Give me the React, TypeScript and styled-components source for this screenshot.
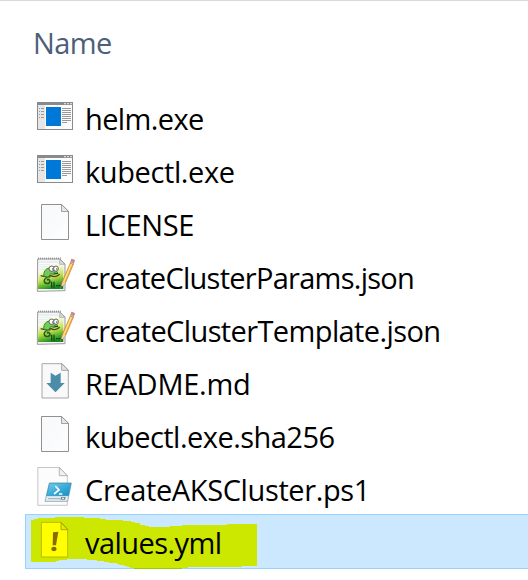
import React from "react";
import styled, { createGlobalStyle } from "styled-components";

const GlobalStyle = createGlobalStyle`
  * { box-sizing: border-box; }
  body { margin: 0; background: #fff; overflow: hidden; }
`;

const Pane = styled.main`
  height: 580px;
  border-top: 1px solid #d9d9d9;
  background: #fff;
  color: #000;
  font: 29px/54px "Open Sans", "Segoe UI", sans-serif;
  overflow: hidden;
`;

const ColumnHeader = styled.header`
  height: 89px;
  padding: 15px 0 0 33px;
  color: #4c607a;
`;

const Label = styled.span<{ $spacing: number }>`
  letter-spacing: ${(p) => p.$spacing}px;
  white-space: nowrap;
`;

const FileList = styled.ul`
  margin: 0;
  padding: 0 0 0 25px;
  list-style: none;
`;

const FileRow = styled.li<{ $selected?: boolean }>`
  position: relative;
  display: flex;
  height: ${(p) => (p.$selected ? 55 : 53)}px;
  margin-right: -2px;
  padding: ${(p) => (p.$selected ? "5px 0 0 10px" : "6px 0 0 11px")};
  border: ${(p) => (p.$selected ? "1px solid #99d1ff" : "0")};
  background: ${(p) => (p.$selected ? "#cce8ff" : "transparent")};
`;

const IconSlot = styled.span`
  position: relative;
  flex: none;
  width: 40px;
  height: 40px;
  margin-right: 9px;
  svg { display: block; }
`;

const FileName = styled(Label)`
  position: relative;
  margin-top: -4px;
`;

const Marker = styled.svg`
  position: absolute;
  left: -11px;
  top: -10px;
`;

const Icon = ({ box, children }: { box: string; children: React.ReactNode }) => (
  <svg width="40" height="40" viewBox={box}>{children}</svg>
);

const AppIcon = () => (
  <Icon box="48 18 120 120">
    <rect x="52.5" y="37.5" width="105" height="81" fill="#fcfcfc" stroke="#878b8e" strokeWidth="3" />
    <rect x="54" y="45" width="21" height="72" fill="#e6e6e6" />
    <rect x="51" y="36" width="108" height="9" fill="#878b8e" />
    <path d="M132 41h6M141 41h6M150 41h6" stroke="#d8dadb" strokeWidth="4" />
    <rect x="78" y="51" width="45" height="57" fill="#0078d7" />
    <path d="M57 55.5h3M63 55.5h9M57 64.5h3M63 64.5h9M57 73.5h3M63 73.5h9M57 82.5h3M63 82.5h9M126 55.5h27M126 61.5h27M126 67.5h27M126 73.5h27M126 79.5h27M126 85.5h27M126 91.5h27M126 97.5h15" stroke="#999" strokeWidth="3" />
  </Icon>
);

const BlankIcon = () => (
  <Icon box="33 21 120 120">
    <defs>
      <linearGradient id="sheet" x1="0" y1="0" x2="1" y2="1">
        <stop stopColor="#f7f9fa" /><stop offset=".6" stopColor="#fafbfc" /><stop offset="1" stopColor="#fff" />
      </linearGradient>
    </defs>
    <path d="M49.5 28.5H110L130.500 48V133.500H49.500Z" fill="url(#sheet)" stroke="#919191" strokeWidth="3" />
    <path d="M109.500 28.500V49.500H130.500Z" fill="#e6e6e6" stroke="#919191" strokeWidth="2.500" />
    <path d="M114 30L130 46" stroke="#fff" strokeWidth="2" strokeDasharray="3 2" />
  </Icon>
);

const NotepadIcon = () => (
  <Icon box="33 15 120 120">
    <defs>
      <linearGradient id="grass" x1=".2" y1="0" x2=".5" y2="1">
        <stop stopColor="#fff" /><stop offset=".3" stopColor="#f4f8d8" /><stop offset=".62" stopColor="#b9e047" /><stop offset="1" stopColor="#118a20" />
      </linearGradient>
    </defs>
    <path d="M38 27H105L120 42V122L37 124Z" fill="#f5f5f5" stroke="#888" strokeWidth="2.500" />
    <path d="M41 39H115V117H39Z" fill="url(#grass)" />
    <path d="M41 36H104M40 43H75M40 50H67M40 57H60" stroke="#c3dceb" strokeWidth="1.500" />
    <path d="M39 25H107" stroke="#777" strokeWidth="5" strokeDasharray="2 4" />
    <path d="M105 27L104 43H119Z" fill="#ddd" stroke="#999" strokeWidth="2" />
    <path d="M47 77Q66 83 77 77Q92 84 104 73" fill="none" stroke="#54401c" strokeWidth="4" />
    <path d="M56 76Q57 56 73 54Q82 48 90 58L99 70Q86 76 77 71L70 82L58 79Z" fill="#72cb55" stroke="#267529" strokeWidth="2.500" />
    <path d="M76 81Q60 82 58 91Q57 101 69 100Q78 98 73 90Q69 86 66 91" fill="none" stroke="#26591d" strokeWidth="5" />
    <path d="M75 81Q63 83 61 91Q61 98 69 97" fill="none" stroke="#77cc48" strokeWidth="2" />
    <ellipse cx="80" cy="56" rx="8" ry="8" fill="#fff" stroke="#444" strokeWidth="2.500" />
    <ellipse cx="93" cy="56" rx="7" ry="8" fill="#fff" stroke="#444" strokeWidth="2.500" />
    <path d="M81 57h3M93 57h4M86 69l13 2" stroke="#263c25" strokeWidth="3" />
    <path d="M80 95V113M87 95V113M93 107h5M100 107h5M107 107h5" stroke="#123d18" strokeWidth="3.500" />
    <path d="M107 115L113 92L136 39L145 43L122 97Z" fill="#f6ae3c" stroke="#c07a28" strokeWidth="2" />
    <path d="M117 94L139 42" stroke="#ffe58a" strokeWidth="4" />
    <path d="M107 115L114 93L122 97Z" fill="#efd3aa" />
    <path d="M107 115l3-8 4 3Z" fill="#333" />
    <path d="M136 39L140 27L149 31L145 43Z" fill="#d88780" stroke="#a86d61" strokeWidth="1.500" />
    <path d="M137 37l8 4" stroke="#bbb" strokeWidth="4" />
  </Icon>
);

const MarkdownIcon = () => (
  <Icon box="33 18 120 120">
    <path d="M51 26H111L130 45V129H51Z" fill="#f9f9f9" stroke="#969696" strokeWidth="2.500" />
    <path d="M110 26V46H130Z" fill="#e4e4e4" stroke="#969696" strokeWidth="2.500" />
    <path d="M77 53L91.500 62L107 53V84H119L91.500 112L64 84H77Z" fill="#4b8ca9" />
  </Icon>
);

const PowerShellIcon = () => (
  <Icon box="33 21 120 120">
    <defs>
      <linearGradient id="console" x1="0" y1="0" x2="1" y2="1">
        <stop stopColor="#7dcaea" /><stop offset=".5" stopColor="#39addc" /><stop offset="1" stopColor="#168ec1" />
      </linearGradient>
    </defs>
    <path d="M38.500 22.500H103L127 47V136H38.500Z" fill="#fcfcfc" stroke="#aaa" strokeWidth="2" />
    <path d="M103 22.500V47H127Z" fill="#f1f1f1" stroke="#969696" strokeWidth="2" />
    <path d="M73 69H139L128 124H60Z" fill="#e4edf1" stroke="#6f929f" strokeWidth="2" />
    <path d="M74 70H138L130 107H65Z" fill="url(#console)" stroke="#268eb4" strokeWidth="2" />
    <path d="M91 78L102 90L87 102M102 102H112" fill="none" stroke="#fff" strokeWidth="5" />
    <path d="M69 116H105" stroke="#98abb3" strokeWidth="3" />
    <path d="M108 111h14l-2 8h-14Z" fill="#748e99" />
    <path d="M111 115h6" stroke="#fff" strokeWidth="3" />
  </Icon>
);

const YamlIcon = () => (
  <Icon box="63 45 120 120">
    <path d="M79 52H139L158 72V156H79Z" fill="#ff0" stroke="#b7a900" strokeWidth="2.500" />
    <path d="M138 53V74H158Z" fill="#dfed00" stroke="#a29b00" strokeWidth="2.500" />
    <path d="M114 82L130 80L123 121H113Z" fill="#8b6900" />
    <ellipse cx="117" cy="132" rx="8" ry="6.500" fill="#8b6900" />
  </Icon>
);

const files = [
  { name: "helm.exe", icon: AppIcon, spacing: -0.62 },
  { name: "kubectl.exe", icon: AppIcon, spacing: -0.4 },
  { name: "LICENSE", icon: BlankIcon, spacing: -0.35 },
  { name: "createClusterParams.json", icon: NotepadIcon, spacing: -0.73 },
  { name: "createClusterTemplate.json", icon: NotepadIcon, spacing: -0.61 },
  { name: "README.md", icon: MarkdownIcon, spacing: -0.25 },
  { name: "kubectl.exe.sha256", icon: BlankIcon, spacing: -0.53 },
  { name: "CreateAKSCluster.ps1", icon: PowerShellIcon, spacing: -0.38 },
  { name: "values.yml", icon: YamlIcon, spacing: -0.55, selected: true },
];

export default function App() {
  return (
    <>
      <GlobalStyle />
      <Pane>
        <ColumnHeader><Label $spacing={-0.6}>Name</Label></ColumnHeader>
        <FileList>
          {files.map(({ name, icon: Glyph, spacing, selected }) => (
            <FileRow key={name} $selected={selected}>
              {selected && (
                <Marker width="260" height="75" viewBox="0 0 780 225" shapeRendering="crispEdges">
                  <path d="M48 45H57V42H69V39H120V36H207V39H255V42H273V45H324V48H348V51H360V54H375V60H390V63H402V66H465V63H501V60H636V57H726V183H681V186H519V189H501V192H357V189H345V186H336V183H327V180H312V177H306V174H282V171H267V168H246V165H216V162H156V165H132V168H123V171H48Z" fill="#cce800" />
                  <path d="M357 190.500H501" stroke="#98cf00" strokeWidth="3" />
                </Marker>
              )}
              <IconSlot><Glyph /></IconSlot>
              <FileName $spacing={spacing}>{name}</FileName>
            </FileRow>
          ))}
        </FileList>
      </Pane>
    </>
  );
}
